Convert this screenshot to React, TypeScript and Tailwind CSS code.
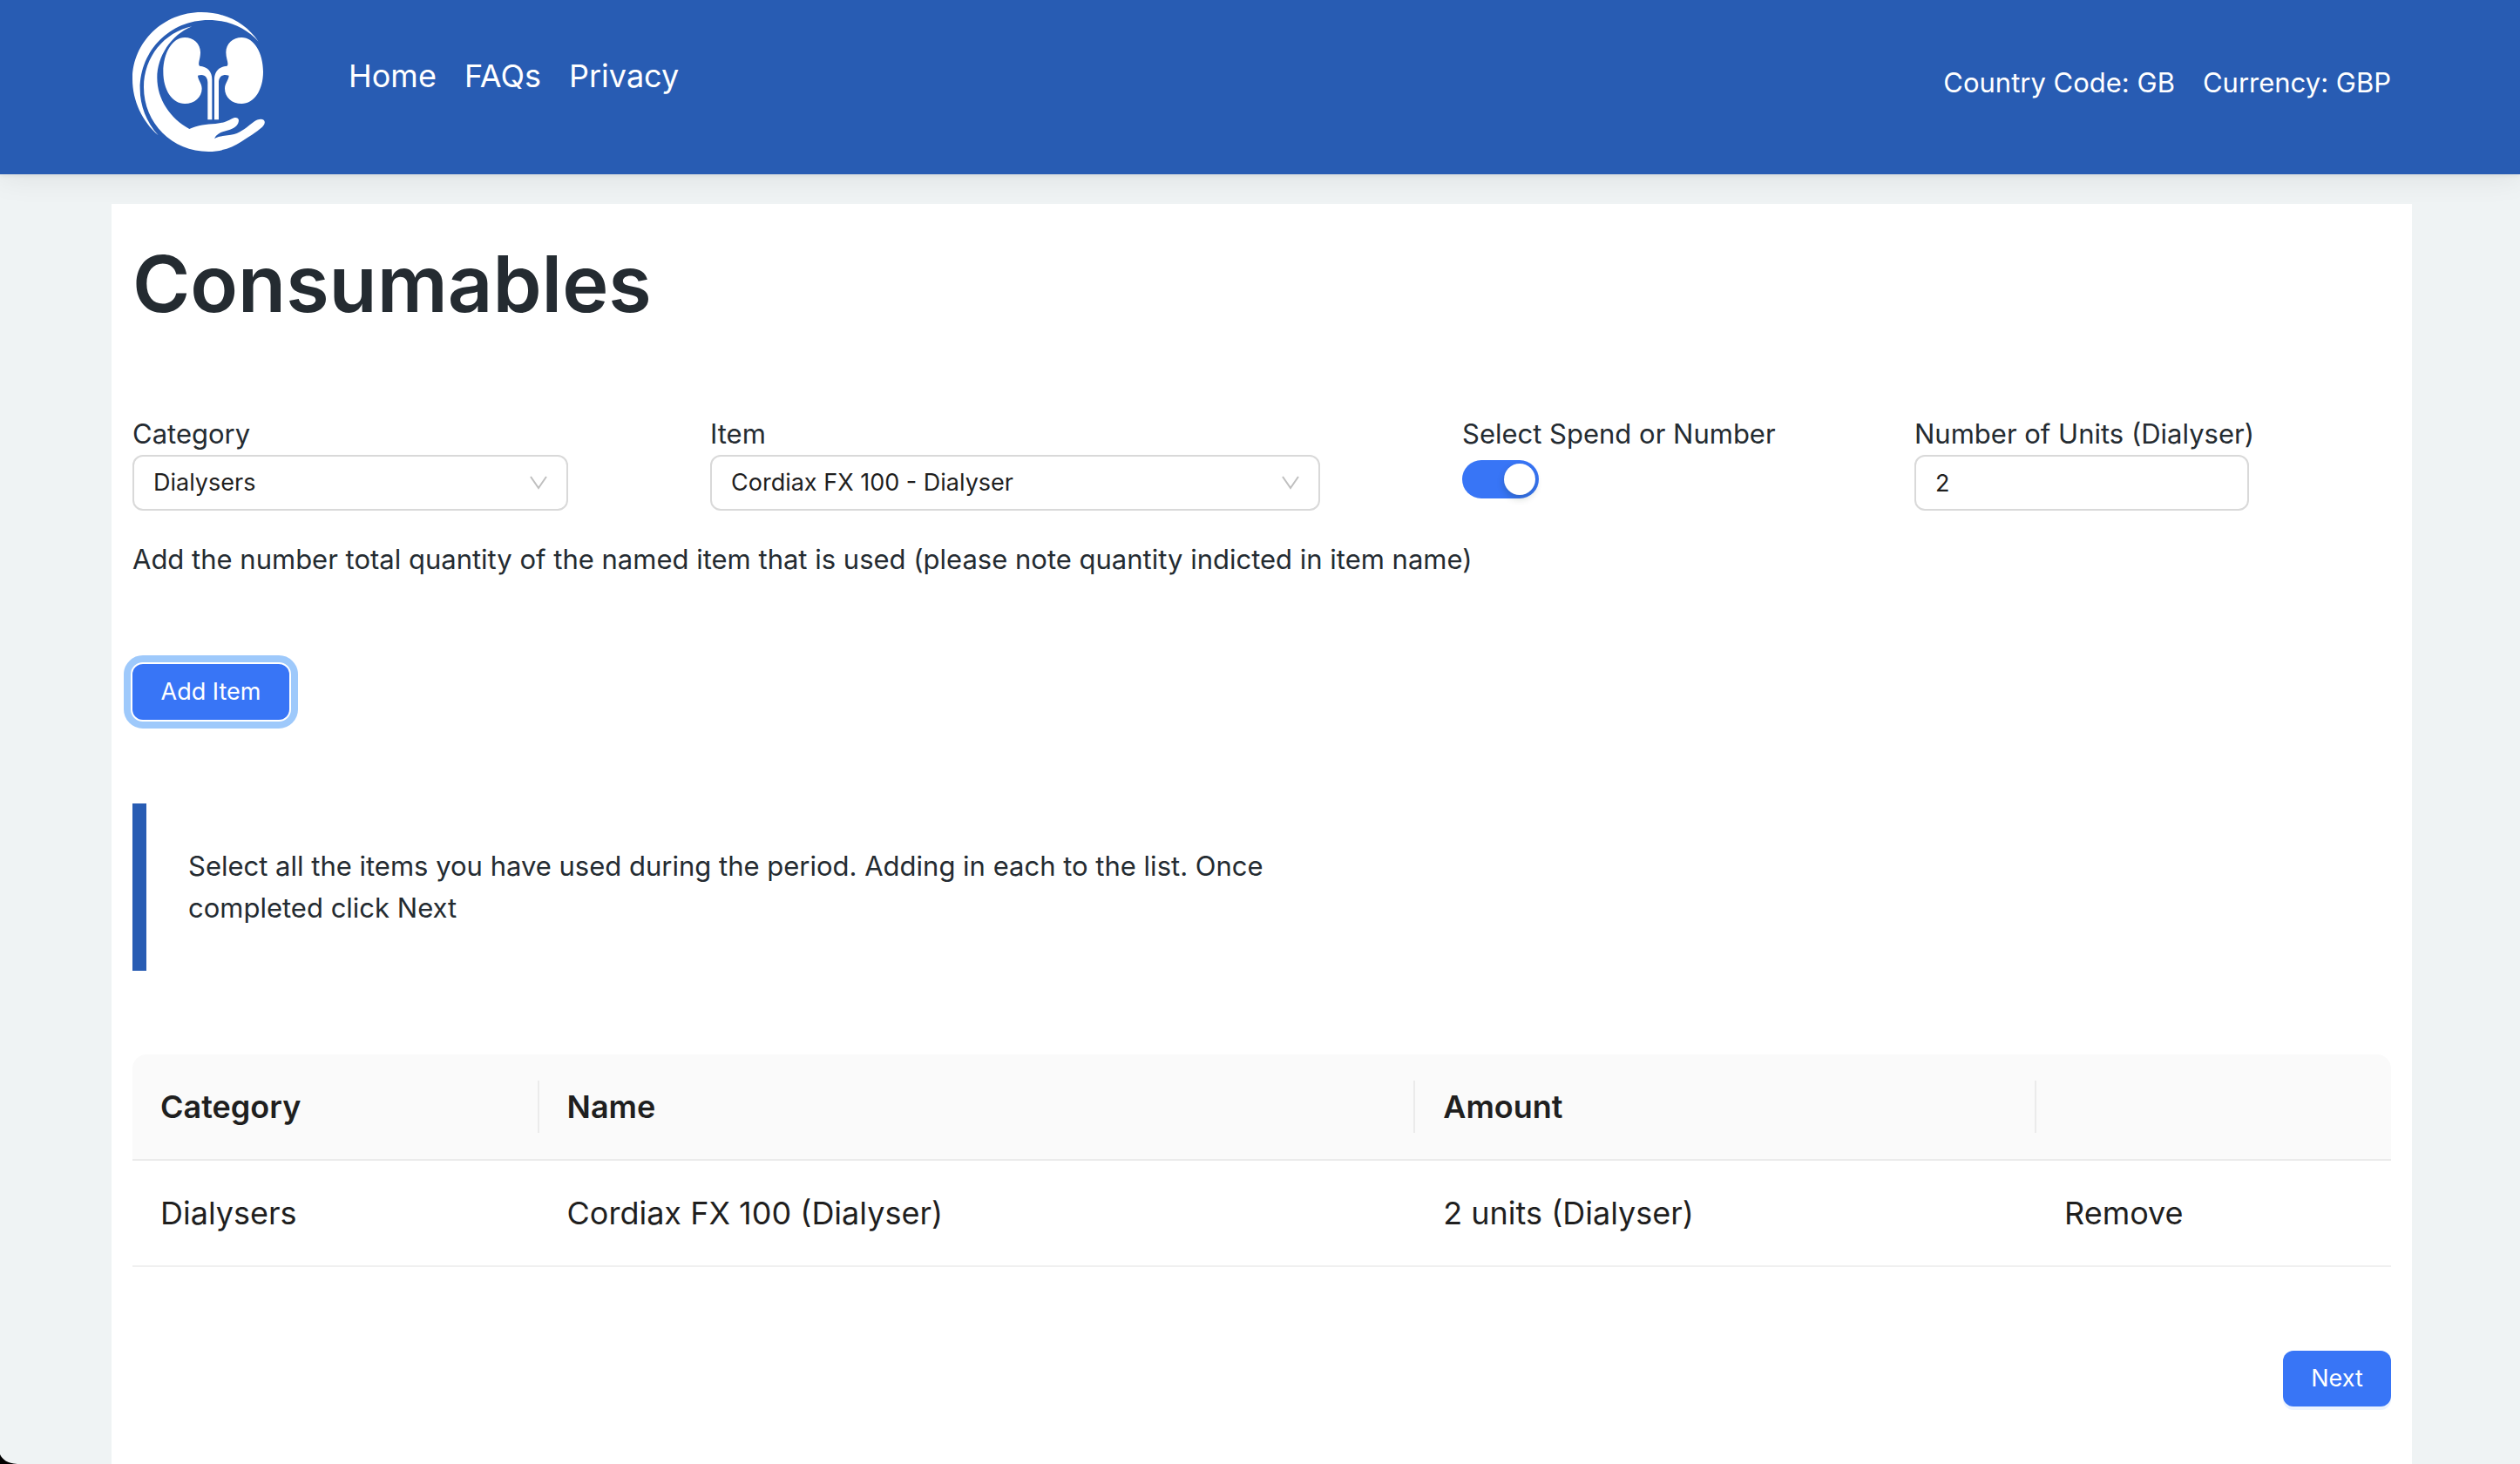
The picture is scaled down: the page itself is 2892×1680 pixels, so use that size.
import { useState } from "react";
import type { ReactNode } from "react";

function Logo() {
  return (
    <svg viewBox="36 42 456 480" className="h-40 w-[152px]" fill="#fff" role="img" aria-label="Kidney care">
      <path d="M470 143C428 82 360 42 273 42C142 42 36 146 36 272C36 347 70 418 125 466C84 420 62 364 62 306C62 172 167 69 298 69C368 69 428 96 470 143Z" />
      <path d="M241 91C146 111 75 196 75 300C75 424 173 522 298 522C341 522 380 508 410 488C436 470 462 456 483 437C492 429 494 418 488 413C479 407 464 412 454 419C433 435 412 454 386 462C362 468 338 466 318 477C328 456 352 452 372 446C392 440 402 427 402 414C401 404 390 402 378 409C362 419 344 424 322 426C290 428 262 430 232 444C166 408 121 342 121 268C121 194 169 120 241 91Z" />
      <path d="M216 129C174 129 142 182 142 247C142 312 174 357 216 357C250 357 275 334 275 305C275 286 262 277 261 260C284 252 295 266 295 284V412H310V273C310 246 294 229 267 227C260 219 270 204 270 180C270 150 246 129 216 129Z" />
      <path d="M412 129C454 129 486 182 486 247C486 312 454 357 412 357C378 357 354 334 354 305C354 286 367 277 368 260C345 252 333 266 333 284V412H318V273C318 246 335 229 362 227C369 219 358 204 358 180C358 150 382 129 412 129Z" />
    </svg>
  );
}

function Chevron() {
  return (
    <svg viewBox="0 0 24 24" className="pointer-events-none absolute top-5 right-[22px] size-6" fill="none" stroke="#bfbfbf" strokeWidth="2" aria-hidden="true">
      <path d="M3 5L12 18L21 5" />
    </svg>
  );
}

function Field({ id, label, className, children }: { id: string; label: string; className?: string; children: ReactNode }) {
  return (
    <div className={className}>
      <label htmlFor={id} className="block text-[31px] leading-[48px] whitespace-nowrap">
        {label}
      </label>
      {children}
    </div>
  );
}

function Select({ id, options }: { id: string; options: string[] }) {
  return (
    <div className="relative">
      <select
        id={id}
        className="block h-16 w-full appearance-none rounded-xl border-2 border-[#d9d9d9] bg-white pr-14 pl-[22px] text-[27px] text-[#1f1f1f]"
      >
        {options.map((o) => (
          <option key={o}>{o}</option>
        ))}
      </select>
      <Chevron />
    </div>
  );
}

const rows = [{ category: "Dialysers", name: "Cordiax FX 100 (Dialyser)", amount: "2 units (Dialyser)" }];

export default function App() {
  const [byNumber, setByNumber] = useState(true);
  const [units, setUnits] = useState("2");

  return (
    <div className="min-h-screen bg-[#eff3f4] font-['Inter',sans-serif] text-[#242b31]">
      <header className="relative flex h-[200px] items-start bg-[#285cb3] pr-[148px] pl-[152px] text-white shadow-[0_2px_4px_rgba(0,0,0,0.05),0_4px_32px_rgba(0,0,0,0.08)]">
        <div className="pt-3.5">
          <Logo />
        </div>
        <nav className="ml-24 flex gap-8 pt-[59px] text-[36px] leading-[56px]">
          <a href="#home">Home</a>
          <a href="#faqs">FAQs</a>
          <a href="#privacy">Privacy</a>
        </nav>
        <div className="ml-auto flex gap-8 pt-[71px] text-[31px] leading-[48px]">
          <span>Country Code: GB</span>
          <span>Currency: GBP</span>
        </div>
      </header>

      <main className="mt-[34px] mr-[124px] ml-32 min-h-[1446px] bg-white px-6 pt-8">
        <h1 className="text-[90px] leading-[120px] font-semibold">Consumables</h1>

        <div className="mt-[88px] flex justify-between pr-[163px]">
          <Field id="category" label="Category" className="w-[500px]">
            <Select id="category" options={["Dialysers"]} />
          </Field>
          <Field id="item" label="Item" className="w-[700px]">
            <Select id="item" options={["Cordiax FX 100 - Dialyser"]} />
          </Field>
          <Field id="mode" label="Select Spend or Number" className="w-[356px]">
            <input
              id="mode"
              type="checkbox"
              role="switch"
              checked={byNumber}
              onChange={(e) => setByNumber(e.target.checked)}
              className="mt-1.5 block h-11 w-[88px] appearance-none rounded-full bg-[#bfbfbf] p-1 before:block before:size-9 before:rounded-full before:bg-white before:shadow-[0_4px_8px_rgba(0,35,11,0.2)] checked:bg-[#3875f6] checked:before:ml-11"
            />
          </Field>
          <Field id="units" label="Number of Units (Dialyser)" className="w-[384px]">
            <input
              id="units"
              type="text"
              value={units}
              onChange={(e) => setUnits(e.target.value)}
              className="block h-16 w-full rounded-xl border-2 border-[#d9d9d9] bg-white px-[22px] text-[27px] text-[#1f1f1f]"
            />
          </Field>
        </div>

        <p className="mt-8 text-[31px] leading-[48px]">
          Add the number total quantity of the named item that is used (please note quantity indicted in item name)
        </p>

        <button
          type="button"
          className="mt-24 block h-16 w-[180px] rounded-xl bg-[#3875f6] text-[27px] text-white outline-8 outline-offset-2 outline-[#9ec9fb]"
        >
          Add Item
        </button>

        <blockquote className="mt-24 max-w-[1360px] border-l-16 border-[#285cb3] p-12 text-[31px] leading-[48px]">
          Select all the items you have used during the period. Adding in each to the list. Once completed click Next
        </blockquote>

        <table className="mt-24 w-full table-fixed border-separate border-spacing-0 text-left text-[36px] leading-[56px] text-[#1f1f1f]">
          <colgroup>
            <col className="w-[18%]" />
            <col className="w-[38.8%]" />
            <col className="w-[27.5%]" />
            <col />
          </colgroup>
          <thead>
            <tr className="h-[122px]">
              {["Category", "Name", "Amount", ""].map((h, i) => (
                <th
                  key={i}
                  scope="col"
                  className="relative border-b-2 border-[#ebebeb] bg-[#fafafa] px-8 font-semibold not-last:after:absolute not-last:after:top-[30px] not-last:after:right-0 not-last:after:h-[60px] not-last:after:w-0.5 not-last:after:bg-[#ebebeb] first:rounded-tl-2xl last:rounded-tr-2xl"
                >
                  {h}
                </th>
              ))}
            </tr>
          </thead>
          <tbody>
            {rows.map((r) => (
              <tr key={r.name} className="h-[122px]">
                <td className="border-b-2 border-[#f0f0f0] px-8">{r.category}</td>
                <td className="border-b-2 border-[#f0f0f0] px-8">{r.name}</td>
                <td className="border-b-2 border-[#f0f0f0] px-8">{r.amount}</td>
                <td className="border-b-2 border-[#f0f0f0] px-8">
                  <button type="button">Remove</button>
                </td>
              </tr>
            ))}
          </tbody>
        </table>

        <div className="mt-24 flex justify-end">
          <button type="button" className="h-16 w-[124px] rounded-xl bg-[#3875f6] text-[27px] text-white shadow-[0_4px_0_#ebf3ff]">
            Next
          </button>
        </div>
      </main>

      <svg viewBox="0 0 20 12" className="fixed bottom-0 left-0 h-3 w-5" aria-hidden="true">
        <path d="M0 1C3 7 8 11 20 12H0Z" fill="#000" />
      </svg>
    </div>
  );
}
